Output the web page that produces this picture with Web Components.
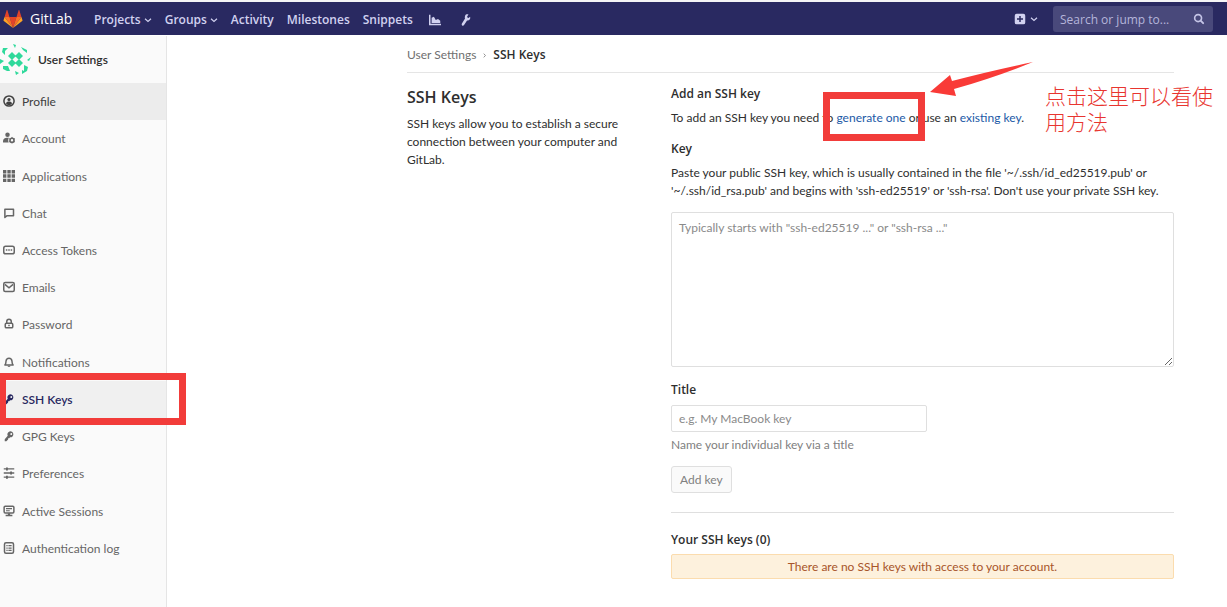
<!DOCTYPE html>
<html lang="en">
<head>
<meta charset="utf-8">
<title>SSH Keys · User Settings · GitLab</title>
<style>
  html, body { margin: 0; min-height: 100%; background: #fff; }
  body { --head: "Open Sans", "Noto Sans", sans-serif; font: 12px/18px Lato, "Open Sans", sans-serif; color: #2e2e2e; }
</style>
</head>
<body>
<app-shell>
  <top-bar slot="header"></top-bar>
  <side-nav slot="side"></side-nav>
  <settings-page>
    <key-form></key-form>
  </settings-page>
</app-shell>

<script>
const ICONS = {
  profile: '<circle cx="8" cy="8" r="6.8" fill="none" stroke="currentColor" stroke-width="2"/><circle cx="8" cy="6" r="2.1"/><path d="M4 11.2c.4-2 2-2.6 4-2.6s3.600.6 4 2.600C11 12.600 9.600 13.200 8 13.200s-3-.6-4-2z"/>',
  account: '<circle cx="6" cy="3.500" r="3"/><path d="M0 13.500C0 9 2 7.500 6 7.500c1 0 1.500.1 2 .3-1.300 1.800-1.300 4.200-.4 6.200H1c-.6 0-1-.2-1-.5z"/><circle cx="12" cy="11" r="2.700" fill="none" stroke="currentColor" stroke-width="2.200"/><path d="M12 6.600v8.800M8.200 8.800l7.600 4.400M15.800 8.800l-7.600 4.400" stroke="currentColor" stroke-width="1.300" stroke-dasharray="1.600 5.600"/>',
  apps: '<path d="M0 0h4.500v4.500H0zM5.800 0h4.500v4.500H5.800zM11.500 0H16v4.500h-4.500zM0 5.800h4.500v4.500H0zM5.800 5.800h4.500v4.500H5.800zM11.500 5.800H16v4.500h-4.500zM0 11.500h4.500V16H0zM5.800 11.500h4.500V16H5.800zM11.500 11.500H16V16h-4.500z"/>',
  chat: '<path d="M2.500 3h11.500v8.500H5.500L2.500 14z" fill="none" stroke="currentColor" stroke-width="2" stroke-linejoin="round"/>',
  token: '<rect x="1" y="3" width="14" height="10" rx="2.500" fill="none" stroke="currentColor" stroke-width="2"/><path d="M3.800 7h2v2h-2zM7 7h2v2H7zM10.200 7h2v2h-2z"/>',
  mail: '<rect x="1" y="2" width="14" height="12" rx="2" fill="none" stroke="currentColor" stroke-width="2"/><path d="M2.500 4.500 8 9l5.500-4.500" fill="none" stroke="currentColor" stroke-width="2"/>',
  lock: '<rect x="3" y="7" width="10" height="6" rx="1.500" fill="none" stroke="currentColor" stroke-width="2"/><path d="M5 7V4.500a3 3 0 0 1 6 0V7" fill="none" stroke="currentColor" stroke-width="2"/><path d="M7 9h2v2H7z"/>',
  bell: '<path d="M2.500 12c1.500-1.500 1.300-3 1.500-5 .3-2.700 1.800-4 4-4s3.700 1.300 4 4c.2 2 0 3.500 1.500 5z" fill="none" stroke="currentColor" stroke-width="2" stroke-linejoin="round"/><path d="M6 13h4c0 1-.8 1.500-2 1.500s-2-.5-2-1.500z"/>',
  key: '<path fill-rule="evenodd" d="M6.300 7.600A4 4 0 1 1 9.500 9.700L8.300 11H6.800v1.500L4.500 15H2.300v-2.800zM10.300 4.200a1.300 1.300 0 1 0 1.800 1.800 1.300 1.300 0 0 0-1.800-1.800z"/>',
  sliders: '<path d="M1 2.500h14M1 8h14M1 13.500h14" stroke="currentColor" stroke-width="1.800"/><path d="M4 .5h2.500v4H4zM9.500 6H12v4H9.500zM4 11.500h2.500v4H4z"/>',
  monitor: '<rect x="1.500" y="1.500" width="13" height="9" rx="1.500" fill="none" stroke="currentColor" stroke-width="2"/><path d="M4 4h8v1.500H4zM4 7h5v1.200H4zM6.500 11h3v2.500h-3zM3.500 13h9v2h-9z"/>',
  log: '<rect x="2" y="1" width="12" height="14" rx="2" fill="none" stroke="currentColor" stroke-width="2"/><path d="M4.500 4h1.700v1.700H4.500zM7.200 4h4.300v1.700H7.200zM4.500 7.200h1.700v1.700H4.500zM7.200 7.200h4.300v1.700H7.200zM4.500 10.400h1.700v1.700H4.500zM7.200 10.400h4.300v1.700H7.200z"/>',
  chevron: '<path d="M2 5.500 8 11l6-5.500" fill="none" stroke="currentColor" stroke-width="2.400"/>',
  chart: '<path d="M0 1h2v12h14v2H0z"/><path d="M3.500 12V5l3-1.500L9 8l3-1.500 3 2.500v3z"/>',
  wrench: '<path d="M13.400 3.600 11.500 5.400 9.800 4.800 9.500 3.200 11.300.8C9.500 0 7.600.6 6.800 2.200c-.6 1.200-.6 2.600-.1 3.700L2.600 12.800c-.6 1-.4 2 .3 2.500.8.600 1.900.4 2.500-.5l4-6.300c1.300.3 2.600-.1 3.500-1.200.8-1 1.000-2.400.5-3.700z"/>',
  plus: '<path fill-rule="evenodd" d="M3.500 1h9A2.500 2.500 0 0 1 15 3.500v9a2.500 2.500 0 0 1-2.500 2.500h-9A2.500 2.500 0 0 1 1 12.500v-9A2.500 2.500 0 0 1 3.500 1zM7 4v3H4v2h3v3h2V9h3V7H9V4z"/>',
  search: '<circle cx="6.800" cy="6.800" r="4.600" fill="none" stroke="currentColor" stroke-width="2.200"/><path d="m10.200 10.200 3.300 3.300" stroke="currentColor" stroke-width="2.600" stroke-linecap="round"/>'
};

class UiIcon extends HTMLElement {
  connectedCallback() {
    if (this.shadowRoot) return;
    this.attachShadow({ mode: 'open' }).innerHTML = `
      <style>
        :host { display: inline-flex; flex: none; width: 12px; height: 12px; }
        svg { width: 100%; height: 100%; fill: currentColor; }
      </style>
      <svg viewBox="0 0 16 16" aria-hidden="true">${ICONS[this.getAttribute('name')]}</svg>`;
  }
}
customElements.define('ui-icon', UiIcon);

class AppShell extends HTMLElement {
  constructor() {
    super();
    this.attachShadow({ mode: 'open' }).innerHTML = `
      <style>
        :host { display: flex; flex-direction: column; min-height: 100vh; overflow-x: clip; }
        .body { display: flex; flex: 1; }
        main { flex: 1; min-width: 0; }
      </style>
      <slot name="header"></slot>
      <div class="body"><slot name="side"></slot><main><slot></slot></main></div>`;
  }
}
customElements.define('app-shell', AppShell);

class TopBar extends HTMLElement {
  constructor() {
    super();
    this.attachShadow({ mode: 'open' }).innerHTML = `
      <style>
        :host { display: block; border-top: 2px solid #f4f4f6; }
        header { display: flex; align-items: center; height: 33px; box-sizing: border-box; padding: 1px 14px 0 3px; background: #292961; color: #d1d1f0; }
        a { color: inherit; text-decoration: none; display: flex; align-items: center; }
        .brand { gap: 7px; color: #fff; font-family: var(--head); font-size: 14px; width: 91px; }
        .brand svg { width: 20px; height: 18px; }
        nav { display: flex; gap: 13px; flex: 1; padding-top: 2px; font-family: var(--head); font-weight: 600; }
        nav a { gap: 3px; }
        nav a[aria-label] { margin: 0 3px; }
        .caret { width: 8px; height: 8px; }
        .new { gap: 4px; margin-right: 15px; }
        form { display: flex; align-items: center; box-sizing: border-box; width: 160px; height: 26px; padding: 0 8px 0 7px; border-radius: 3px; background: #49497b; }
        input { flex: 1; min-width: 0; border: 0; padding: 1px 0 0; background: none; font: 12px/18px var(--head); color: inherit; outline: 0; }
        input::placeholder { color: #b5b5da; opacity: 1; }
        form ui-icon { color: #c4c4e6; }
      </style>
      <header>
        <a class="brand" href="#" aria-label="GitLab home">
          <svg viewBox="0 0 36 34" aria-hidden="true">
            <path fill="#e24329" d="M18 34 24.600 13H11.400z"/>
            <path fill="#fc6d26" d="M18 34 11.400 13H2zM18 34l6.600-21H34z"/>
            <path fill="#fca326" d="M2 13 .1 19.200c-.2.600 0 1.200.5 1.600L18 34zM34 13l1.900 6.200c.2.600 0 1.200-.5 1.600L18 34z"/>
            <path fill="#e24329" d="M2 13h9.400L7.400.6c-.2-.7-1.200-.7-1.400 0zM34 13h-9.400L28.600.6c.2-.7 1.200-.7 1.400 0z"/>
          </svg><span>GitLab</span></a>
        <nav>
          <a href="#">Projects <ui-icon class="caret" name="chevron"></ui-icon></a>
          <a href="#">Groups <ui-icon class="caret" name="chevron"></ui-icon></a>
          <a href="#">Activity</a>
          <a href="#">Milestones</a>
          <a href="#">Snippets</a>
          <a href="#" aria-label="Analytics"><ui-icon name="chart"></ui-icon></a>
          <a href="#" aria-label="Admin area"><ui-icon name="wrench"></ui-icon></a>
        </nav>
        <a class="new" href="#" aria-label="New"><ui-icon name="plus"></ui-icon><ui-icon class="caret" name="chevron"></ui-icon></a>
        <form><input type="search" aria-label="Search" placeholder="Search or jump to..."><ui-icon name="search"></ui-icon></form>
      </header>`;
  }
}
customElements.define('top-bar', TopBar);

class SideNav extends HTMLElement {
  constructor() {
    super();
    const items = [
      ['profile', 'Profile', 'hover'], ['account', 'Account'], ['apps', 'Applications'], ['chat', 'Chat'],
      ['token', 'Access Tokens'], ['mail', 'Emails'], ['lock', 'Password'], ['bell', 'Notifications'],
      ['key', 'SSH Keys', 'active'], ['key', 'GPG Keys'], ['sliders', 'Preferences'],
      ['monitor', 'Active Sessions'], ['log', 'Authentication log']
    ];
    this.attachShadow({ mode: 'open' }).innerHTML = `
      <style>
        :host { display: block; flex: none; box-sizing: border-box; width: 167px; background: #fafafa; border-right: 1px solid #e5e5e5; margin-top: 1px; }
        .title { display: flex; align-items: center; gap: 7px; height: 47px; color: #2e2e2e; font-weight: 600; text-decoration: none; }
        .title svg { width: 31px; height: 31px; }
        ul { display: grid; grid-auto-rows: 1fr; height: 484px; margin: 0; padding: 0; list-style: none; }
        li { position: relative; display: flex; }
        li a { flex: 1; display: flex; align-items: center; gap: 7px; padding: 1px 0 0 3px; color: #666; text-decoration: none; }
        li ui-icon { margin-bottom: 2px; }
        .hover a { background: #ececec; color: #404040; }
        .active a { background: #f0f0f0; color: #292961; font-weight: 600; }
        .mark { position: absolute; inset: -8px -20px -7px -1px; border: 7px solid #f23c3a; z-index: 1; pointer-events: none; }
      </style>
      <a class="title" href="#">
        <svg viewBox="0 0 31 31" aria-hidden="true" fill="#2fd99b">
          <path d="m12 8 4 4-4 4-4-4zM19 8l4 4-4 4-4-4zM12 15l4 4-4 4-4-4zM19 15l4 4-4 4-4-4z"/>
          <path d="M3 4h5L5 7v4L2 8zM21 3l6 3v3l-4-3zM28 23l-4-2v6l-2-1v4l5-3zM3 22h5l2 5H7l-4-2zM13 0l3 1-1 3zM31 13l-4 3 2 1zM0 15l4 2-4 3zM15 27l4 2-3 2z"/>
        </svg><span>User Settings</span></a>
      <ul>${items.map(([icon, label, state]) => `<li class="${state || ''}"><a href="#"><ui-icon name="${icon}"></ui-icon>${label}</a>${state === 'active' ? '<span class="mark"></span>' : ''}</li>`).join('')}</ul>`;
  }
}
customElements.define('side-nav', SideNav);

class SettingsPage extends HTMLElement {
  constructor() {
    super();
    this.attachShadow({ mode: 'open' }).innerHTML = `
      <style>
        :host { display: block; padding: 0 53px 0 240px; }
        .crumbs { display: flex; align-items: center; gap: 6px; height: 38px; box-sizing: border-box; padding-top: 3px; border-bottom: 1px solid #e5e5e5; }
        .crumbs a { color: #707070; text-decoration: none; }
        .crumbs ui-icon { width: 5px; height: 5px; transform: rotate(-90deg); color: #707070; }
        .crumbs strong { font-family: var(--head); font-weight: 600; }
        .cols { display: grid; grid-template-columns: 264px 1fr; padding-top: 12px; }
        .intro { padding-right: 40px; }
        h1 { margin: 0 0 6px; font-family: var(--head); font-size: 16px; line-height: 24px; font-weight: 600; }
        p { margin: 0; }
      </style>
      <nav class="crumbs" aria-label="Breadcrumb"><a href="#">User Settings</a><ui-icon name="chevron"></ui-icon><strong>SSH Keys</strong></nav>
      <div class="cols">
        <div class="intro"><h1>SSH Keys</h1><p>SSH keys allow you to establish a secure connection between your computer and GitLab.</p></div>
        <slot></slot>
      </div>`;
  }
}
customElements.define('settings-page', SettingsPage);

class KeyForm extends HTMLElement {
  constructor() {
    super();
    this.attachShadow({ mode: 'open' }).innerHTML = `
      <style>
        :host { display: block; position: relative; }
        h2, label { display: block; margin: 0; font-family: var(--head); font-size: 12px; line-height: 18px; font-weight: 600; }
        p { margin: 6px 0 0; }
        a { color: #1b59a6; text-decoration: none; }
        form { margin-top: 13px; }
        textarea, input { display: block; box-sizing: border-box; border: 1px solid #dfdfdf; border-radius: 2px; background: #fff; font: inherit; color: inherit; padding: 6px 7px; outline: 0; }
        textarea { width: 100%; height: 155px; margin: 12px 0 14px; resize: vertical; }
        input { width: 256px; height: 27px; margin-top: 6px; }
        ::placeholder { color: #8a8a8a; opacity: 1; }
        .hint { margin-top: 4px; color: #808080; }
        button { display: block; box-sizing: border-box; height: 27px; margin-top: 12px; padding: 0 8px; border: 1px solid #dfdfdf; border-radius: 3px; background: #fafafa; color: #808080; font: inherit; }
        hr { margin: 19px 0 18px; border: 0; border-top: 1px solid #dfdfdf; }
        .empty { box-sizing: border-box; height: 25px; margin-top: 5px; line-height: 23px; text-align: center; color: #a8552a; background: #fdf1dd; border: 1px solid #fbdcae; border-radius: 2px; }
        .box { position: absolute; top: 7px; left: 152px; width: 88px; height: 35px; border: 7px solid #f23c3a; pointer-events: none; }
        .arrow { position: absolute; top: -24px; left: 259px; width: 104px; height: 36px; fill: #f93a37; pointer-events: none; }
        .note { position: absolute; top: -3px; left: 374px; width: 170px; font: 300 21px/26px "Noto Sans CJK SC", sans-serif; color: #e8352f; }
      </style>
      <h2>Add an SSH key</h2>
      <p>To add an SSH key you need to <a href="#">generate one</a> or use an <a href="#">existing key</a>.</p>
      <form>
        <label for="key">Key</label>
        <p>Paste your public SSH key, which is usually contained in the file '~/.ssh/id_ed25519.pub' or '~/.ssh/id_rsa.pub' and begins with 'ssh-ed25519' or 'ssh-rsa'. Don't use your private SSH key.</p>
        <textarea id="key" placeholder='Typically starts with "ssh-ed25519 ..." or "ssh-rsa ..."'></textarea>
        <label for="title">Title</label>
        <input id="title" type="text" placeholder="e.g. My MacBook key">
        <p class="hint">Name your individual key via a title</p>
        <button type="button">Add key</button>
      </form>
      <hr>
      <h2>Your SSH keys (0)</h2>
      <div class="empty">There are no SSH keys with access to your account.</div>
      <div class="box"></div>
      <svg class="arrow" viewBox="0 0 104 36" aria-hidden="true"><path d="M0 31 20 14l2 6Q60 10 103 1 66 16 24 28l2 7z"/></svg>
      <div class="note" lang="zh-CN">点击这里可以看使用方法</div>`;
  }
}
customElements.define('key-form', KeyForm);
</script>
</body>
</html>
